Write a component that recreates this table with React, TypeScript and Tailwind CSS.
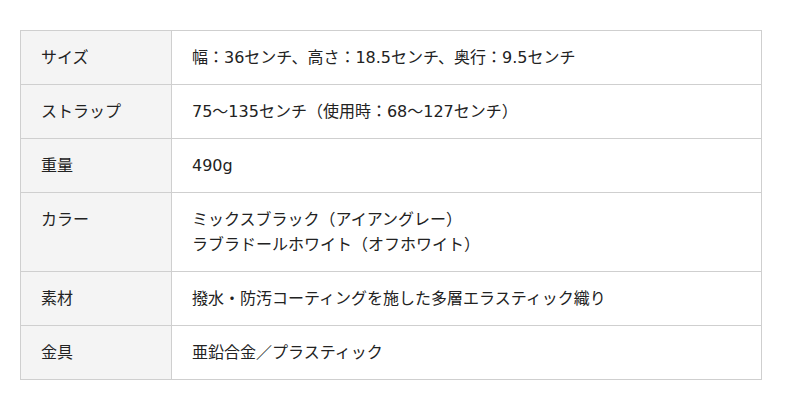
const rows: { label: string; value: string[] }[] = [
  { label: 'サイズ', value: ['幅：36センチ、高さ：18.5センチ、奥行：9.5センチ'] },
  { label: 'ストラップ', value: ['75〜135センチ（使用時：68〜127センチ）'] },
  { label: '重量', value: ['490g'] },
  { label: 'カラー', value: ['ミックスブラック（アイアングレー）', 'ラブラドールホワイト（オフホワイト）'] },
  { label: '素材', value: ['撥水・防汚コーティングを施した多層エラスティック織り'] },
  { label: '金具', value: ['亜鉛合金／プラスティック'] },
];

export default function App() {
  return (
    <div className="min-h-screen bg-white px-5 pt-[30px] font-['DejaVu_Sans','Noto_Sans_CJK_JP',sans-serif] text-[16px] text-[#222]">
      <table className="w-[742px] border-collapse border border-[#cfcfcf]">
        <tbody>
          {rows.map((row) => (
            <tr key={row.label} className="border-b border-[#cfcfcf]">
              <th className="w-[151px] border-r border-[#cfcfcf] bg-[#f4f4f4] px-5 py-[14px] text-left align-top font-normal leading-[25px]">
                {row.label}
              </th>
              <td className="px-5 py-[14px] align-top leading-[25px]">
                {row.value.map((line) => (
                  <div key={line}>{line}</div>
                ))}
              </td>
            </tr>
          ))}
        </tbody>
      </table>
    </div>
  );
}
